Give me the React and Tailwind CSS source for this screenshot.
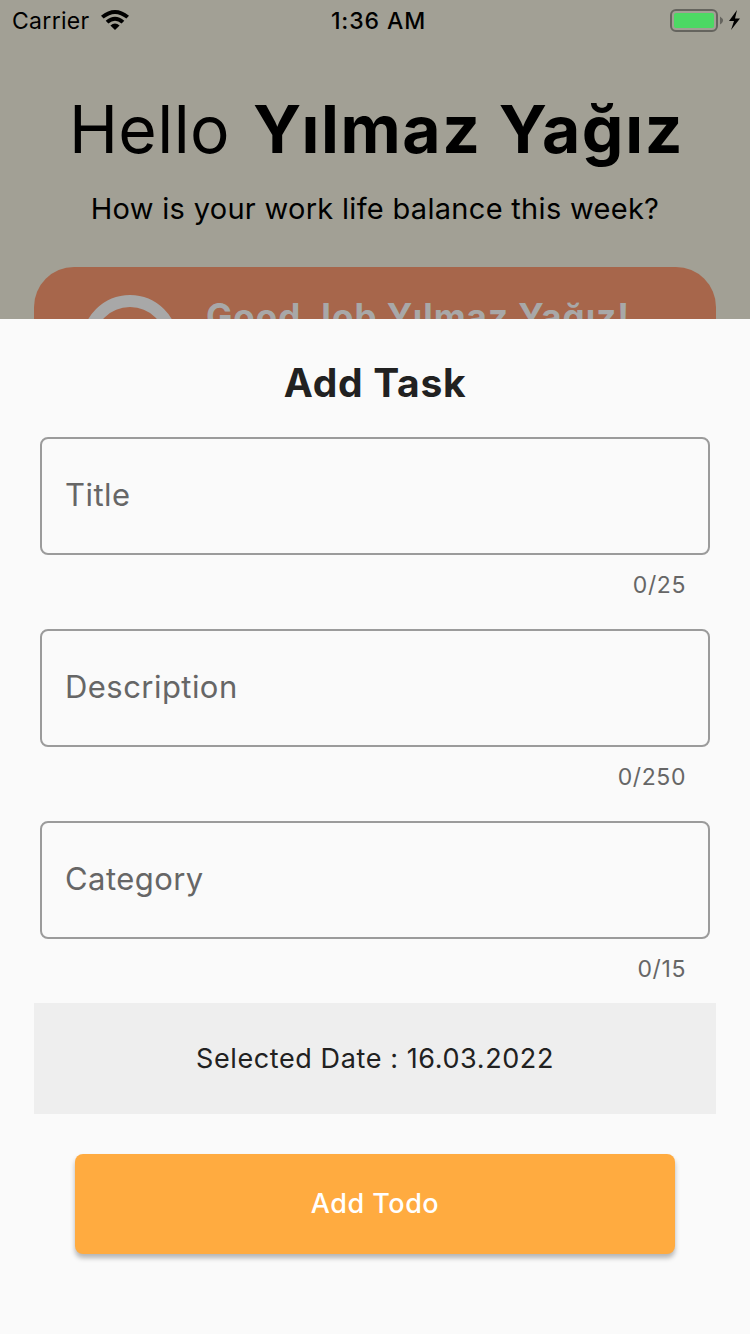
function Field({ label, count }) {
  return (
    <div className="mx-[40px] h-[192px]">
      <div className="flex h-[118px] items-center rounded-[8px] border-2 border-[#9b9b9b] px-[23px] pb-[3px]">
        <span className="whitespace-nowrap text-[31px] leading-none tracking-[0.45px] text-[#666666]">{label}</span>
      </div>
      <div className="mt-[17px] pr-[24px] text-right text-[23px] leading-[26px] tracking-[0.6px] text-[#666666]">{count}</div>
    </div>
  );
}

export default function App() {
  return (
    <div className="flex h-[1334px] w-[750px] flex-col overflow-hidden bg-[#fafafa] font-['Inter',sans-serif] text-[#212121]">
      <div className="h-[319px] shrink-0 overflow-hidden bg-[#a2a095] text-black">
        <div className="grid h-[41px] grid-cols-3 items-center pr-[10px] pl-[12px] text-[23px] leading-none">
          <div className="flex items-center gap-[11px]">
            <span className="pt-[2px] tracking-[0.3px]">Carrier</span>
            <svg className="mb-[2px]" width="28" height="20" viewBox="0 0 28 20">
              <path d="M0 5.8Q14-5.8 28 5.8L25.4 8.6Q14-.8 2.6 8.6Z M4.7 10.7Q14 3 23.3 10.7L20.6 13.5Q14 8 7.4 13.5Z M9.4 15.5Q14 11.5 18.6 15.5L14 20Z" />
            </svg>
          </div>
          <span className="pl-[5px] pt-[2px] text-center font-medium tracking-[0.9px]">1:36 AM</span>
          <div className="flex items-center justify-end">
            <svg className="mb-[2px]" width="70" height="24" viewBox="0 0 70 24">
              <rect x="1" y="2" width="46" height="21" rx="5" fill="none" stroke="#65645e" strokeWidth="2" />
              <rect x="4" y="5" width="40" height="15" rx="2" fill="#4cd964" />
              <path d="M50 8.5Q56 12.5 50 16.5Z" fill="#65645e" />
              <path d="M67 2L59 13H64L61 22L70 10.5H65Z" />
            </svg>
          </div>
        </div>
        <h1 className="mt-[49px] whitespace-nowrap pl-[3px] text-center text-[66px] font-normal leading-[78px] tracking-[0.4px]">
          Hello <span className="ml-[4px] font-bold tracking-[1.6px]">Yılmaz Yağız</span>
        </h1>
        <p className="mt-[22px] whitespace-nowrap text-center text-[29px] leading-[38px] tracking-[0.3px]">How is your work life balance this week?</p>
        <div className="mx-[34px] mt-[39px] flex h-[180px] rounded-[40px] bg-[#a7664b] pl-[48px] pt-[28px] text-[#a8a8a8]">
          <div className="h-[96px] w-[96px] rounded-full border-[12px] border-[#a8a8a8]" />
          <span className="ml-[28px] mt-[1px] whitespace-nowrap text-[35px] font-bold leading-[40px] tracking-[1px]">Good Job Yılmaz Yağız!</span>
        </div>
      </div>
      <h2 className="mt-[40px] mb-[30px] text-center text-[39px] font-bold leading-[48px] tracking-[0.7px]">Add Task</h2>
      <Field label="Title" count="0/25" />
      <Field label="Description" count="0/250" />
      <Field label="Category" count="0/15" />
      <div className="mx-[34px] mt-[-10px] flex h-[111px] shrink-0 items-center justify-center bg-[#eeeeee] pt-[2px] text-[27px] tracking-[0.6px]">Selected Date : 16.03.2022</div>
      <button className="mx-[75px] mt-[40px] h-[100px] shrink-0 rounded-[8px] bg-[#ffab40] text-[27px] font-medium tracking-[0.5px] text-white shadow-[0_4px_5px_rgba(0,0,0,0.28)]">Add Todo</button>
    </div>
  );
}
